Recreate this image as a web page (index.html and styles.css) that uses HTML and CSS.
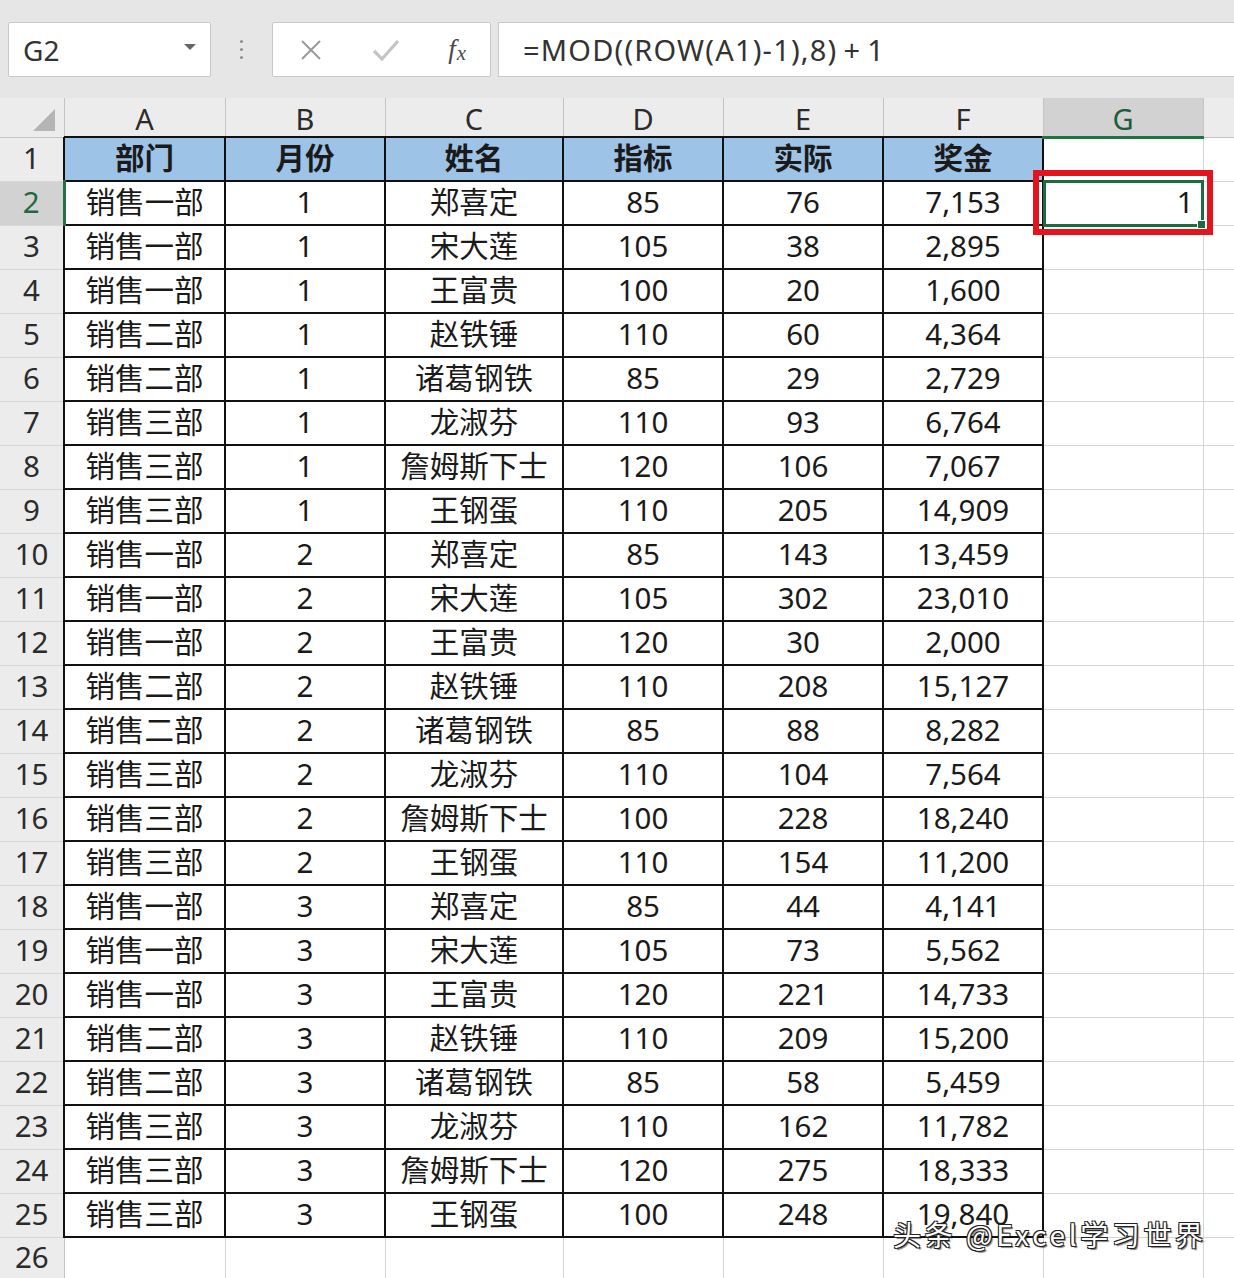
FILE: index.html
```html
<!DOCTYPE html>
<html lang="zh-CN">
<head>
<meta charset="utf-8">
<title>Excel</title>
<link rel="stylesheet" href="styles.css">
</head>
<body>
<div class="app">
  <div class="toolbar">
    <div class="namebox">
      <span class="name">G2</span>
      <svg class="caret" width="14" height="8" viewBox="0 0 14 8"><path d="M1 1 L13 1 L7 7 Z" fill="#666"/></svg>
    </div>
    <div class="sep">
      <span></span><span></span><span></span>
    </div>
    <div class="fxbtns">
      <svg class="ico" width="24" height="24" viewBox="0 0 24 24"><path d="M3 3 L21 21 M21 3 L3 21" stroke="#9a9a9a" stroke-width="2" fill="none"/></svg>
      <svg class="ico" width="28" height="24" viewBox="0 0 28 24"><path d="M2 13 L10 21 L26 3" stroke="#c4c4c4" stroke-width="3.2" fill="none"/></svg>
      <span class="fx">f<span class="fxx">x</span></span>
    </div>
    <div class="formula"><span class="op-l">=</span>MOD((ROW(A1)-1),8)<span class="op">+</span>1</div>
  </div>

  <table class="sheet">
    <colgroup>
      <col class="c-rh"><col class="c-a"><col class="c-b"><col class="c-c"><col class="c-d"><col class="c-e"><col class="c-f"><col class="c-g"><col class="c-h">
    </colgroup>
    <thead>
      <tr class="colhead">
        <th class="corner"><span class="tri"></span></th>
        <th>A</th><th>B</th><th>C</th><th>D</th><th>E</th><th>F</th><th class="sel">G</th><th class="last"></th>
      </tr>
    </thead>
    <tbody>
      <tr class="hdr"><th class="rh">1</th><td>部门</td><td>月份</td><td>姓名</td><td>指标</td><td>实际</td><td>奖金</td><td class="g"></td><td class="g"></td></tr>
      <tr><th class="rh selrow">2</th><td>销售一部</td><td>1</td><td>郑喜定</td><td>85</td><td>76</td><td>7,153</td><td class="g active"><span class="val">1</span><span class="focus"></span><span class="mark"></span></td><td class="g"></td></tr>
      <tr><th class="rh">3</th><td>销售一部</td><td>1</td><td>宋大莲</td><td>105</td><td>38</td><td>2,895</td><td class="g"></td><td class="g"></td></tr>
      <tr><th class="rh">4</th><td>销售一部</td><td>1</td><td>王富贵</td><td>100</td><td>20</td><td>1,600</td><td class="g"></td><td class="g"></td></tr>
      <tr><th class="rh">5</th><td>销售二部</td><td>1</td><td>赵铁锤</td><td>110</td><td>60</td><td>4,364</td><td class="g"></td><td class="g"></td></tr>
      <tr><th class="rh">6</th><td>销售二部</td><td>1</td><td>诸葛钢铁</td><td>85</td><td>29</td><td>2,729</td><td class="g"></td><td class="g"></td></tr>
      <tr><th class="rh">7</th><td>销售三部</td><td>1</td><td>龙淑芬</td><td>110</td><td>93</td><td>6,764</td><td class="g"></td><td class="g"></td></tr>
      <tr><th class="rh">8</th><td>销售三部</td><td>1</td><td>詹姆斯下士</td><td>120</td><td>106</td><td>7,067</td><td class="g"></td><td class="g"></td></tr>
      <tr><th class="rh">9</th><td>销售三部</td><td>1</td><td>王钢蛋</td><td>110</td><td>205</td><td>14,909</td><td class="g"></td><td class="g"></td></tr>
      <tr><th class="rh">10</th><td>销售一部</td><td>2</td><td>郑喜定</td><td>85</td><td>143</td><td>13,459</td><td class="g"></td><td class="g"></td></tr>
      <tr><th class="rh">11</th><td>销售一部</td><td>2</td><td>宋大莲</td><td>105</td><td>302</td><td>23,010</td><td class="g"></td><td class="g"></td></tr>
      <tr><th class="rh">12</th><td>销售一部</td><td>2</td><td>王富贵</td><td>120</td><td>30</td><td>2,000</td><td class="g"></td><td class="g"></td></tr>
      <tr><th class="rh">13</th><td>销售二部</td><td>2</td><td>赵铁锤</td><td>110</td><td>208</td><td>15,127</td><td class="g"></td><td class="g"></td></tr>
      <tr><th class="rh">14</th><td>销售二部</td><td>2</td><td>诸葛钢铁</td><td>85</td><td>88</td><td>8,282</td><td class="g"></td><td class="g"></td></tr>
      <tr><th class="rh">15</th><td>销售三部</td><td>2</td><td>龙淑芬</td><td>110</td><td>104</td><td>7,564</td><td class="g"></td><td class="g"></td></tr>
      <tr><th class="rh">16</th><td>销售三部</td><td>2</td><td>詹姆斯下士</td><td>100</td><td>228</td><td>18,240</td><td class="g"></td><td class="g"></td></tr>
      <tr><th class="rh">17</th><td>销售三部</td><td>2</td><td>王钢蛋</td><td>110</td><td>154</td><td>11,200</td><td class="g"></td><td class="g"></td></tr>
      <tr><th class="rh">18</th><td>销售一部</td><td>3</td><td>郑喜定</td><td>85</td><td>44</td><td>4,141</td><td class="g"></td><td class="g"></td></tr>
      <tr><th class="rh">19</th><td>销售一部</td><td>3</td><td>宋大莲</td><td>105</td><td>73</td><td>5,562</td><td class="g"></td><td class="g"></td></tr>
      <tr><th class="rh">20</th><td>销售一部</td><td>3</td><td>王富贵</td><td>120</td><td>221</td><td>14,733</td><td class="g"></td><td class="g"></td></tr>
      <tr><th class="rh">21</th><td>销售二部</td><td>3</td><td>赵铁锤</td><td>110</td><td>209</td><td>15,200</td><td class="g"></td><td class="g"></td></tr>
      <tr><th class="rh">22</th><td>销售二部</td><td>3</td><td>诸葛钢铁</td><td>85</td><td>58</td><td>5,459</td><td class="g"></td><td class="g"></td></tr>
      <tr><th class="rh">23</th><td>销售三部</td><td>3</td><td>龙淑芬</td><td>110</td><td>162</td><td>11,782</td><td class="g"></td><td class="g"></td></tr>
      <tr><th class="rh">24</th><td>销售三部</td><td>3</td><td>詹姆斯下士</td><td>120</td><td>275</td><td>18,333</td><td class="g"></td><td class="g"></td></tr>
      <tr><th class="rh">25</th><td>销售三部</td><td>3</td><td>王钢蛋</td><td>100</td><td>248</td><td>19,840</td><td class="g"></td><td class="g"></td></tr>
      <tr class="empty"><th class="rh">26</th><td class="g"></td><td class="g"></td><td class="g"></td><td class="g"></td><td class="g"></td><td class="g"></td><td class="g"></td><td class="g"></td></tr>
    </tbody>
  </table>

  <div class="watermark">头条 @Excel学习世界</div>
</div>
</body>
</html>
```

FILE: styles.css
```css
* { box-sizing: border-box; }
html, body { margin: 0; padding: 0; }
body {
  background: #ffffff;
  font-family: "Noto Sans", "Noto Sans CJK SC", sans-serif;
  color: #1a1a1a;
  overflow: hidden;
}
.app {
  position: relative;
  width: 1234px;
  height: 1278px;
  overflow: hidden;
}

/* ---------- formula bar ---------- */
.toolbar {
  display: flex;
  align-items: center;
  height: 98px;
  padding: 22px 0 21px 8px;
  background: #e6e6e6;
}
.namebox {
  width: 203px;
  height: 55px;
  background: #fff;
  border: 1px solid #c9c9c9;
  border-radius: 2px;
  display: flex;
  align-items: center;
  justify-content: space-between;
  padding: 0 13px 0 14px;
}
.name {
  font-size: 28px;
  color: #333;
}
.caret { margin-top: -6px; }
.sep {
  width: 61px;
  display: flex;
  flex-direction: column;
  align-items: center;
  gap: 5px;
}
.sep span {
  width: 3px;
  height: 3px;
  border-radius: 50%;
  background: #8a8a8a;
}
.fxbtns {
  width: 219px;
  height: 55px;
  background: #fff;
  border: 1px solid #c9c9c9;
  border-radius: 2px;
  display: flex;
  align-items: center;
  justify-content: space-between;
  padding: 0 24px 0 26px;
  margin-right: 7px;
}
.fx {
  font-family: "Liberation Serif", "DejaVu Serif", serif;
  font-style: italic;
  font-size: 27px;
  color: #4a4a4a;
  line-height: 1;
}
.fxx {
  font-size: 21px;
  position: relative;
  top: 2px;
  margin-left: 1px;
}
.formula {
  flex: 1;
  height: 55px;
  background: #fff;
  border: 1px solid #c9c9c9;
  border-right: none;
  display: flex;
  align-items: center;
  padding-left: 24px;
  font-size: 29px;
  color: #333;
  letter-spacing: 1.2px;
  white-space: pre;
}
.op-l { margin-right: 0; }
.op { margin: 0 6px; }

/* ---------- sheet ---------- */
.sheet {
  border-collapse: collapse;
  table-layout: fixed;
  width: 1234px;
}
.c-rh { width: 64px; }
.c-a { width: 161px; }
.c-b { width: 160px; }
.c-c { width: 178px; }
.c-d { width: 160px; }
.c-e { width: 160px; }
.c-f { width: 160px; }
.c-g { width: 160px; }
.c-h { width: 31px; }

.sheet th, .sheet td {
  padding: 0 0 2px 0;
  text-align: center;
  vertical-align: middle;
  line-height: 1;
  white-space: nowrap;
  overflow: visible;
}
.colhead th {
  height: 39px;
  background: #ececec;
  border-right: 1px solid #c4c4c4;
  border-bottom: 1px solid #c4c4c4;
  font-weight: normal;
  font-size: 29px;
  color: #2b2b2b;
  padding-top: 3px;
  padding-bottom: 0;
}
.colhead th.last { border-right: none; }
.colhead th.sel {
  background: #d2d2d2;
  color: #1f5e3c;
  border-bottom: 3px solid #217346;
}
.corner { position: relative; }
.tri {
  position: absolute;
  right: 9px;
  bottom: 6px;
  width: 0;
  height: 0;
  border-left: 22px solid transparent;
  border-bottom: 22px solid #b5b5b5;
}

.sheet tbody tr { height: 44px; }
.sheet tbody tr.empty { height: 41px; }
.rh {
  background: #ececec;
  border-right: 1px solid #c4c4c4;
  border-bottom: 1px solid #d6d6d6;
  font-weight: normal;
  font-size: 29.5px;
  color: #2b2b2b;
}
.rh.selrow {
  background: #d2d2d2;
  color: #1f6b41;
  border-right: 3px solid #217346;
}

.sheet td {
  border: 2px solid #111;
  font-size: 29.5px;
  color: #1a1a1a;
}
.sheet td.g {
  border: 1px solid #d6d6d6;
}
.hdr td {
  background: #9dc3e6;
  font-weight: bold;
}
.hdr td.g { background: #fff; }

/* active cell + annotation */
.sheet td.active {
  position: relative;
  text-align: right;
  padding-right: 9px;
}
.focus {
  position: absolute;
  left: -1px;
  top: -2px;
  right: -1px;
  bottom: -2px;
  border: 3px solid #1f6b41;
}
.focus::after {
  content: "";
  position: absolute;
  right: -5px;
  bottom: -5px;
  width: 7px;
  height: 7px;
  background: #1f6b41;
  border: 1px solid #fff;
}
.mark {
  position: absolute;
  left: -11px;
  top: -12px;
  right: -10px;
  bottom: -10px;
  border: 6px solid #e2141d;
}

.watermark {
  position: absolute;
  left: 893px;
  top: 1217px;
  font-family: "Noto Sans CJK SC", "Noto Sans", sans-serif;
  font-size: 28px;
  line-height: 34px;
  letter-spacing: 3.6px;
  color: #fff;
  text-shadow: -1px -1px 0 #222, 1px -1px 0 #222, -1px 1px 0 #222, 1px 1px 0 #222, 2px 2px 1px rgba(0,0,0,0.5);
  white-space: nowrap;
}
```
